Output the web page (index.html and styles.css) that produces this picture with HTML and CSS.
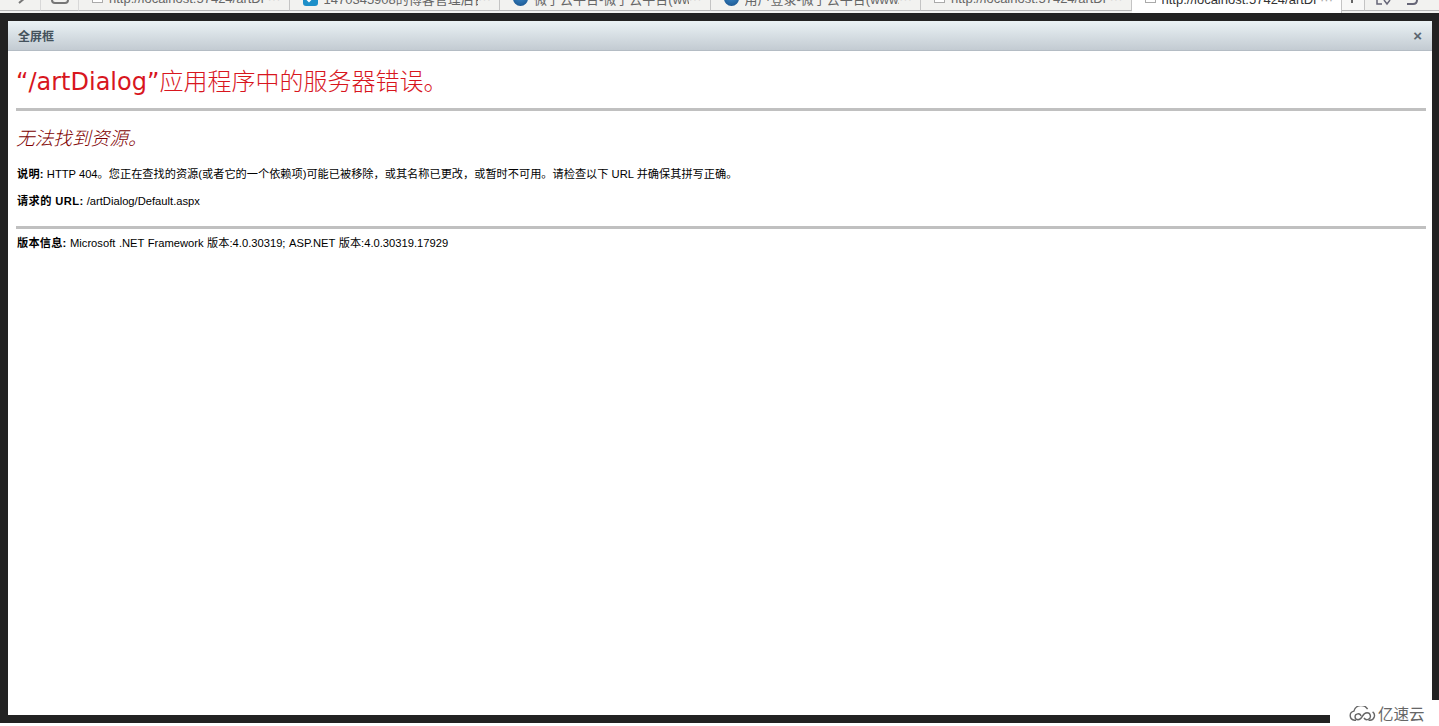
FILE: index.html
```html
<!DOCTYPE html>
<html>
<head>
    <meta charset="UTF-8">
    <title>全屏框</title>
    <link rel="stylesheet" href="styles.css">
</head>
<body>
<div class="tabstrip">
    <div class="tool-btn back">
        <svg width="20" height="24" viewBox="0 0 20 24"><path d="M3 11h10M9 16l6-5" fill="none" stroke="#777" stroke-width="2"/></svg>
    </div>
    <div class="tool-btn reload">
        <svg width="20" height="24" viewBox="0 0 20 24"><path d="M2 8v5q0 3 3 3h10q3 0 3-3V8" fill="none" stroke="#777" stroke-width="2"/></svg>
    </div>
    <div class="tab">
        <span class="page-icon"></span><span class="tab-title">http://localhost:57424/artDi</span><span class="more">···</span>
    </div>
    <div class="tab">
        <span class="check-icon"><svg width="15" height="15" viewBox="0 0 15 15"><path d="M3 7l3 3 6-6" fill="none" stroke="#fff" stroke-width="2"/></svg></span><span class="tab-title">1470345908的博客管理后台</span><span class="more">···</span>
    </div>
    <div class="tab">
        <span class="globe-icon"></span><span class="tab-title">微子云平台-微子云平台(www.</span><span class="more">···</span>
    </div>
    <div class="tab">
        <span class="globe-icon"></span><span class="tab-title">用户登录-微子云平台(www.</span><span class="more">···</span>
    </div>
    <div class="tab">
        <span class="page-icon"></span><span class="tab-title">http://localhost:57424/artDi</span><span class="more">···</span>
    </div>
    <div class="tab active">
        <span class="page-icon"></span><span class="tab-title">http://localhost:57424/artDi</span><span class="more">···</span>
    </div>
    <div class="new-tab">
        <svg width="23" height="24" viewBox="0 0 23 24"><path d="M10 6v10" stroke="#666" stroke-width="2"/></svg>
    </div>
    <div class="strip-tools">
        <svg width="24" height="24" viewBox="0 0 24 24"><path d="M7 8v9h5M14 13l3 4 3-4" fill="none" stroke="#667" stroke-width="1.5"/></svg>
        <svg width="24" height="24" viewBox="0 0 24 24"><path d="M17 6v7q0 4-4 4H7" fill="none" stroke="#667" stroke-width="2"/></svg>
    </div>
</div>

<div class="frame">
    <div class="dialog">
        <div class="dialog-title">
            <span>全屏框</span>
            <span class="dialog-close">×</span>
        </div>
        <div class="dialog-body">
            <h1>“/artDialog”<span class="zh">应用程序中的服务器错误。</span></h1>
            <hr>
            <h2>无法找到资源。</h2>
            <p class="desc"><b>说明:</b> HTTP 404。您正在查找的资源(或者它的一个依赖项)可能已被移除&#65292;或其名称已更改&#65292;或暂时不可用。请检查以下 URL 并确保其拼写正确。</p>
            <p class="req"><b>请求的 URL:</b> /artDialog/Default.aspx</p>
            <hr class="hr2">
            <p class="ver"><b>版本信息:</b> Microsoft .NET Framework 版本:4.0.30319; ASP.NET 版本:4.0.30319.17929</p>
        </div>
    </div>
</div>

<div class="watermark">
    <svg width="27" height="15" viewBox="0 0 27 15">
        <path d="M7 14.2H5.5a4.6 4.6 0 0 1-.6-9.1A7.5 7.5 0 0 1 18.6 3.2 M19.5 14.2H21a4.6 4.6 0 0 0 2.6-8.3" fill="none" stroke="#666" stroke-width="1.4"/>
        <path d="M12 10.2a3 3 0 1 0-3 3.6c2 0 3.5-1.8 4.5-3.6s2.5-3.4 4.5-3.4a3.4 3.4 0 1 1-3 5" fill="none" stroke="#666" stroke-width="1.4"/>
    </svg>
    <span>亿速云</span>
</div>
</body>
</html>
```

FILE: styles.css
```css
html, body {
    margin: 0;
    padding: 0;
    height: 726px;
    overflow: hidden;
    background: #fff;
}
body {
    font-family: "Liberation Sans", "Noto Sans CJK SC", sans-serif;
    font-size: 11.2px;
    color: #000;
}

/* browser tabs, only the lower edge is on screen */
.tabstrip {
    height: 13px;
    box-sizing: border-box;
    padding-bottom: 2px;
    display: flex;
    align-items: flex-end;
    overflow: hidden;
    background: #f2f2f0;
    font-size: 13px;
    color: #666;
}
.tool-btn {
    flex: none;
    height: 24px;
    box-sizing: border-box;
    display: flex;
    justify-content: center;
    border-right: 1px solid #d8d8d8;
    border-bottom: 1px solid #b8b8b8;
}
.tool-btn.back {
    width: 41px;
}
.tool-btn.reload {
    width: 38px;
}
.tab {
    flex: none;
    width: 210.5px;
    height: 24px;
    box-sizing: border-box;
    display: flex;
    align-items: center;
    padding: 0 8px 0 13px;
    border-right: 1px solid #c4c4c4;
    border-bottom: 1px solid #b8b8b8;
    white-space: nowrap;
    overflow: hidden;
}
.tab.active {
    height: 26px;
    margin-bottom: -2px;
    padding-bottom: 2px;
    background: #fff;
    color: #333;
    border-bottom: none;
}
.tab-title {
    flex: 1;
    overflow: hidden;
}
.more {
    flex: none;
    color: #aaa;
}
.page-icon {
    flex: none;
    width: 11px;
    height: 11px;
    margin-right: 6px;
    box-sizing: border-box;
    background: #fff;
    border: 1px solid #aaa;
    align-self: flex-start;
    margin-top: 5px;
}
.check-icon {
    flex: none;
    width: 15px;
    height: 15px;
    margin-right: 6px;
    border-radius: 3px;
    background: #1d8fc9;
}
.globe-icon {
    flex: none;
    width: 15px;
    height: 15px;
    margin-right: 6px;
    border-radius: 50%;
    background: radial-gradient(circle at 50% 30%, #3f8fd0, #174f88);
}
.new-tab {
    flex: none;
    width: 23px;
    height: 24px;
    box-sizing: border-box;
    background: #f8f8f7;
    border-right: 1px solid #c4c4c4;
    border-bottom: 1px solid #b8b8b8;
}
.strip-tools {
    flex: 1;
    display: flex;
    gap: 6px;
    height: 24px;
    box-sizing: border-box;
    border-bottom: 1px solid #b8b8b8;
    padding-left: 5px;
}

/* dark mask around the dialog */
.frame {
    height: 710px;
    box-sizing: border-box;
    padding: 8px 7px 8px 8px;
    background: #222;
}
.dialog {
    height: 100%;
    background: #fff;
    display: flex;
    flex-direction: column;
}
.dialog-title {
    flex: none;
    height: 30px;
    box-sizing: border-box;
    padding: 0 10px;
    display: flex;
    align-items: center;
    justify-content: space-between;
    background: linear-gradient(#eaf2f5, #c3cbd2);
    border-bottom: 1px solid #b4bcc4;
    font-size: 12px;
    font-weight: bold;
    color: #44525c;
}
.dialog-close {
    font-size: 15px;
    color: #5a6670;
}
.dialog-body {
    flex: 1;
    padding: 0 6px 0 8px;
}

h1 {
    margin: 14px 0 0;
    height: 30px;
    line-height: 30px;
    font-family: "DejaVu Sans", "Noto Sans CJK SC", sans-serif;
    font-size: 24px;
    font-weight: normal;
    color: #d8161e;
}
h1 .zh {
    font-family: "Noto Sans CJK SC", sans-serif;
    font-weight: 300;
}
hr {
    margin: 13px 0 0;
    height: 3px;
    border: 0;
    background: #c0c0c0;
}
h2 {
    margin: 14px 0 0;
    height: 24px;
    line-height: 24px;
    font-family: "Noto Sans CJK SC", sans-serif;
    font-size: 18.67px;
    font-style: italic;
    font-weight: 300;
    color: #800000;
}
p {
    margin: 0 0 0 1px;
    height: 14px;
    line-height: 14px;
}
p b {
    letter-spacing: .2px;
}
.desc {
    margin-top: 18px;
}
.req {
    margin-top: 13px;
}
.req b {
    letter-spacing: .4px;
}
.hr2 {
    margin-top: 18px;
}
.ver {
    margin-top: 7px;
    word-spacing: .4px;
}

.watermark {
    position: absolute;
    right: 0;
    bottom: 0;
    width: 109px;
    height: 26px;
    background: #fff;
    display: flex;
    align-items: center;
    gap: 2px;
    padding-left: 19px;
    box-sizing: border-box;
    font-size: 15.5px;
    color: #666;
}
```
